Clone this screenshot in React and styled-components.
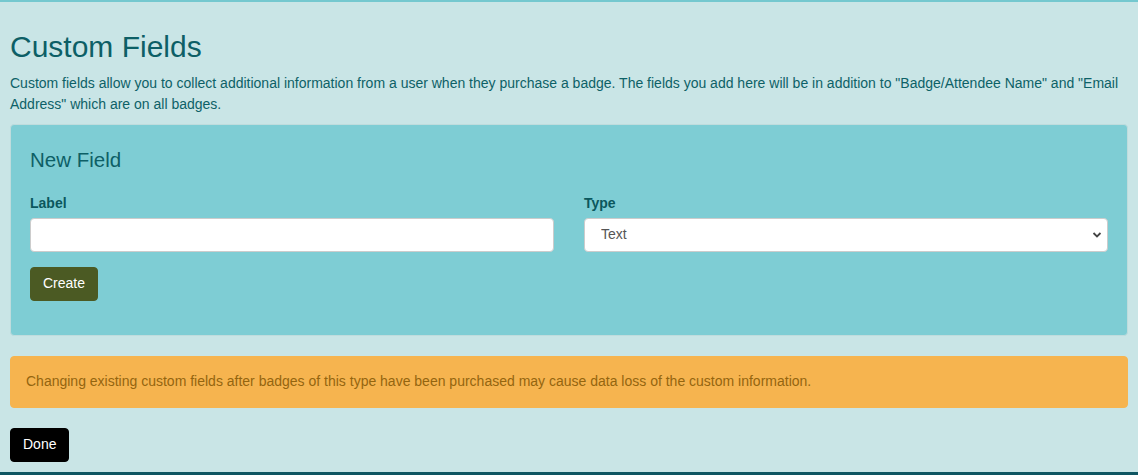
import styled, { createGlobalStyle } from "styled-components";

const GlobalStyle = createGlobalStyle`
  html, body {
    margin: 0;
    padding: 0;
    background: #c9e5e6;
  }
  body {
    font-family: "Liberation Sans", Arial, sans-serif;
    font-size: 14px;
    line-height: 1.42857;
    color: #0d6167;
  }
  * { box-sizing: border-box; }
`;

const Page = styled.div`
  height: 475px;
  border-top: 2px solid #74c8cf;
  border-bottom: 3px solid #0f5662;
  padding: 8px 10px 0;
  overflow: hidden;
`;

const Title = styled.h2`
  font-size: 30px;
  font-weight: 400;
  line-height: 1.1;
  margin: 20px 0 10px;
  color: #0d5f66;
`;

const Intro = styled.p`
  margin: 0 0 9px;
  line-height: 21px;
  color: #0d6167;
`;

const Well = styled.div`
  background: #7ecdd4;
  border: 1px solid #bfdcdd;
  border-radius: 4px;
  padding: 19px;
  margin: 0 0 20px;
`;

const WellTitle = styled.h4`
  font-size: 20.5px;
  font-weight: 400;
  line-height: 1.1;
  margin: 5px 0 21px;
  color: #0d5f66;
`;

const Row = styled.div`
  display: grid;
  grid-template-columns: 1fr 1fr;
  column-gap: 30px;
  margin-bottom: 15px;
`;

const Group = styled.div`
  display: flex;
  flex-direction: column;
`;

const Label = styled.label`
  font-weight: 700;
  font-size: 14px;
  line-height: 20px;
  margin-bottom: 5px;
  color: #0b575d;
`;

const Input = styled.input`
  height: 34px;
  padding: 6px 12px;
  font: inherit;
  color: #555;
  background: #fff;
  border: 1px solid #ccc;
  border-radius: 4px;
  outline: none;
`;

const SelectWrap = styled.div`
  position: relative;
`;

const Select = styled.select`
  width: 100%;
  height: 34px;
  padding: 6px 12px 6px 16px;
  font: inherit;
  color: #555;
  background: #fff;
  border: 1px solid #ccc;
  border-radius: 4px;
  appearance: none;
  outline: none;
`;

const Chevron = styled.svg`
  position: absolute;
  right: 6px;
  top: 13px;
  pointer-events: none;
`;

const Button = styled.button`
  display: inline-block;
  height: 34px;
  padding: 6px 12px;
  font: inherit;
  font-size: 14px;
  color: #fff;
  background: ${(p) => (p.$dark ? "#000" : "#4b5a23")};
  border: 1px solid ${(p) => (p.$dark ? "#000" : "#4b5a23")};
  border-radius: 4px;
  cursor: pointer;
`;

const ButtonRow = styled.div`
  margin-bottom: 15px;
`;

const Alert = styled.div`
  background: #f6b44f;
  border: 1px solid #f6b44f;
  border-radius: 4px;
  padding: 15px;
  margin-bottom: 20px;
  color: #94650f;
`;

export default function App() {
  return (
    <>
      <GlobalStyle />
      <Page>
        <Title>Custom Fields</Title>
        <Intro>
          Custom fields allow you to collect additional information from a user when they purchase a badge. The fields
          you add here will be in addition to "Badge/Attendee Name" and "Email Address" which are on all badges.
        </Intro>
        <Well>
          <WellTitle>New Field</WellTitle>
          <Row>
            <Group>
              <Label>Label</Label>
              <Input type="text" />
            </Group>
            <Group>
              <Label>Type</Label>
              <SelectWrap>
                <Select defaultValue="text">
                  <option value="text">Text</option>
                </Select>
                <Chevron width="10" height="8" viewBox="0 0 10 8">
                  <path d="M1.5 2 L5 5.5 L8.5 2" fill="none" stroke="#444" strokeWidth="1.8" />
                </Chevron>
              </SelectWrap>
            </Group>
          </Row>
          <ButtonRow>
            <Button>Create</Button>
          </ButtonRow>
        </Well>
        <Alert>
          Changing existing custom fields after badges of this type have been purchased may cause data loss of the
          custom information.
        </Alert>
        <Button $dark>Done</Button>
      </Page>
    </>
  );
}
